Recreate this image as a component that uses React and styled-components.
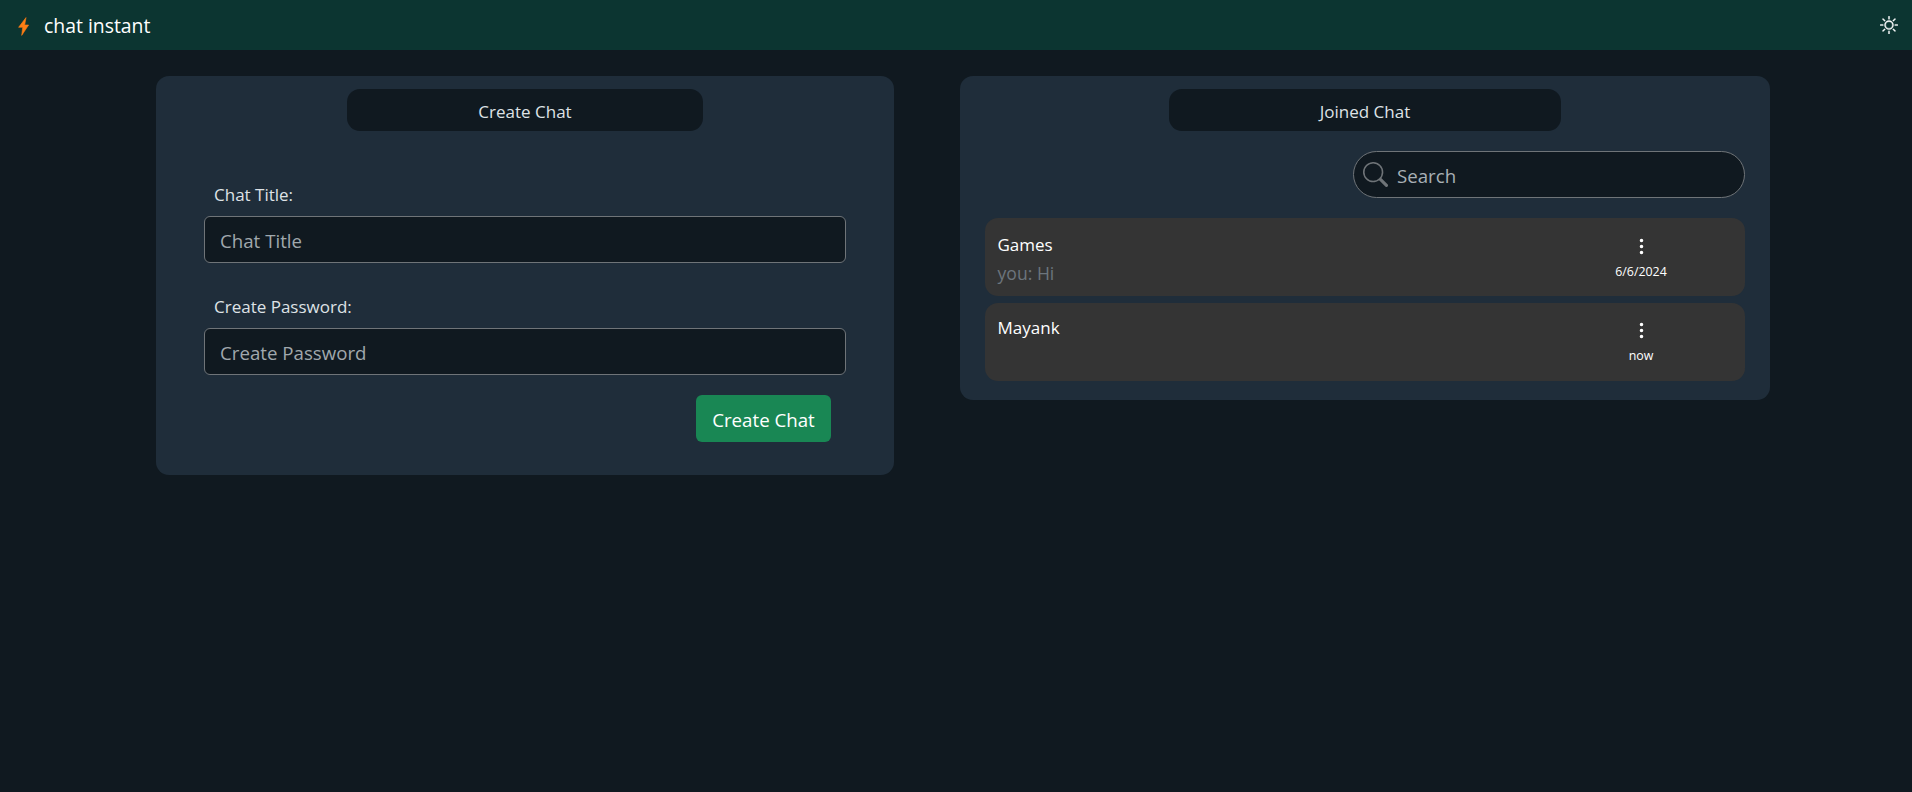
import React from "react";
import styled, { createGlobalStyle } from "styled-components";
import { BsSun, BsSearch, BsThreeDotsVertical } from "react-icons/bs";

const Global = createGlobalStyle`
  * { box-sizing: border-box; }
  html, body { margin: 0; padding: 0; height: 100%; background: #101920; overflow: hidden; }
  body { font-family: "Open Sans", "Noto Sans", sans-serif; color: #dee2e6; }
`;

const Page = styled.div`
  width: 1912px;
  height: 792px;
  background: #101920;
`;

const NavBar = styled.header`
  height: 50px;
  background: #0c3531;
  display: flex;
  align-items: center;
  padding: 0 14px 0 18px;
`;

const BoltSvg = styled.svg`
  width: 11px;
  height: 19px;
  margin: 2px 15px 0 0;
  flex: none;
  fill: #fd7e14;
  stroke: #fd7e14;
  stroke-width: 0.6;
  stroke-linejoin: round;
`;

const Bolt = () => (
  <BoltSvg viewBox="0 0 11 19" aria-hidden="true">
    <path d="M8 0.6 0.6 10.3H4.7L3.7 18.4 10.6 8H6.7Z" />
  </BoltSvg>
);

const Brand = styled.span`
  font-size: 19.4px;
  line-height: 28px;
  padding-top: 1px;
  color: #fff;
  flex: 1;
`;

const ThemeIcon = styled(BsSun)`
  color: #fff;
  font-size: 18px;
  stroke: currentColor;
  stroke-width: 0.35;
`;

const Main = styled.main`
  display: flex;
  align-items: flex-start;
  gap: 66px;
  padding: 26px 0 0 156px;
`;

const Panel = styled.section`
  width: ${(p) => p.$width}px;
  background: #1f2d3a;
  border-radius: 13px;
  padding: 13px ${(p) => p.$pad}px ${(p) => p.$bottom}px;
  display: flex;
  flex-direction: column;
`;

const PanelTitle = styled.h2`
  align-self: center;
  width: ${(p) => p.$width}px;
  height: 42px;
  margin: 0;
  padding-top: 2px;
  background: #101920;
  border-radius: 13px;
  display: flex;
  align-items: center;
  justify-content: center;
  font-size: 17px;
  font-weight: 400;
  color: #dee2e6;
`;

const Form = styled.form`
  display: flex;
  flex-direction: column;
  padding: 52px 0 0;
`;

const Label = styled.label`
  font-size: 17px;
  line-height: 24px;
  padding-left: 10px;
  margin-bottom: 9px;
  color: #dee2e6;
`;

const TextInput = styled.input`
  width: 100%;
  height: 47px;
  background: #101920;
  border: 1px solid #6f7478;
  border-radius: 6px;
  padding: 1px 15px 0;
  font: 400 18.7px "Open Sans", sans-serif;
  color: #dee2e6;
  margin-bottom: 32px;
  &::placeholder { color: #a0a8ad; opacity: 1; }
`;

const FormActions = styled.div`
  display: flex;
  justify-content: flex-end;
  padding-right: 15px;
  margin-top: -12px;
`;

const SubmitButton = styled.button`
  width: 135px;
  height: 47px;
  padding: 1px 0 0;
  background: #198754;
  border: 0;
  border-radius: 6px;
  color: #fff;
  font: 400 18.7px "Open Sans", sans-serif;
`;

const SearchRow = styled.div`
  align-self: flex-end;
  width: 392px;
  height: 47px;
  margin: 20px 0 20px;
  background: #101920;
  border: 1px solid #6f7478;
  border-radius: 24px;
  display: flex;
  align-items: center;
  padding-left: 9px;
`;

const SearchIcon = styled(BsSearch)`
  color: #6f7478;
  font-size: 25px;
  flex: none;
`;

const SearchInput = styled.input`
  flex: 1;
  min-width: 0;
  background: transparent;
  border: 0;
  outline: 0;
  padding: 1px 0 0 9px;
  font: 400 18.7px "Open Sans", sans-serif;
  color: #dee2e6;
  &::placeholder { color: #a8b0b6; opacity: 1; }
`;

const ChatList = styled.ul`
  list-style: none;
  margin: 0;
  padding: 0;
  display: flex;
  flex-direction: column;
  gap: 7px;
`;

const ChatItem = styled.li`
  height: 78px;
  background: #343434;
  border-radius: 13px;
  display: flex;
  justify-content: space-between;
  padding: ${(p) => p.$top}px 0 0 12.5px;
`;

const ChatText = styled.div`
  display: flex;
  flex-direction: column;
`;

const ChatName = styled.span`
  font-size: 17px;
  line-height: 26px;
  color: #fff;
`;

const ChatPreview = styled.span`
  font-size: 17.6px;
  line-height: 30px;
  color: #6c757d;
`;

const ChatMeta = styled.div`
  width: 208px;
  display: flex;
  flex-direction: column;
  align-items: center;
  padding: ${(p) => p.$top}px 0 0 0;
`;

const MenuIcon = styled(BsThreeDotsVertical)`
  color: #fff;
  font-size: 19px;
`;

const ChatTime = styled.span`
  font-size: 12.4px;
  line-height: 16px;
  margin-top: 8px;
  color: #fff;
`;

const chats = [
  { name: "Games", preview: "you: Hi", time: "6/6/2024", top: 14, metaTop: 5 },
  { name: "Mayank", preview: "", time: "now", top: 12, metaTop: 6 },
];

export default function App() {
  return (
    <Page>
      <Global />
      <NavBar>
        <Bolt />
        <Brand>chat instant</Brand>
        <ThemeIcon />
      </NavBar>
      <Main>
        <Panel $width={738} $pad={48} $bottom={33}>
          <PanelTitle $width={356}>Create Chat</PanelTitle>
          <Form onSubmit={(e) => e.preventDefault()}>
            <Label htmlFor="title">Chat Title:</Label>
            <TextInput id="title" placeholder="Chat Title" />
            <Label htmlFor="pass">Create Password:</Label>
            <TextInput id="pass" placeholder="Create Password" />
            <FormActions>
              <SubmitButton type="submit">Create Chat</SubmitButton>
            </FormActions>
          </Form>
        </Panel>
        <Panel $width={810} $pad={25} $bottom={19}>
          <PanelTitle $width={392}>Joined Chat</PanelTitle>
          <SearchRow>
            <SearchIcon />
            <SearchInput placeholder="Search" />
          </SearchRow>
          <ChatList>
            {chats.map((c) => (
              <ChatItem key={c.name} $top={c.top}>
                <ChatText>
                  <ChatName>{c.name}</ChatName>
                  {c.preview && <ChatPreview>{c.preview}</ChatPreview>}
                </ChatText>
                <ChatMeta $top={c.metaTop}>
                  <MenuIcon />
                  <ChatTime>{c.time}</ChatTime>
                </ChatMeta>
              </ChatItem>
            ))}
          </ChatList>
        </Panel>
      </Main>
    </Page>
  );
}
